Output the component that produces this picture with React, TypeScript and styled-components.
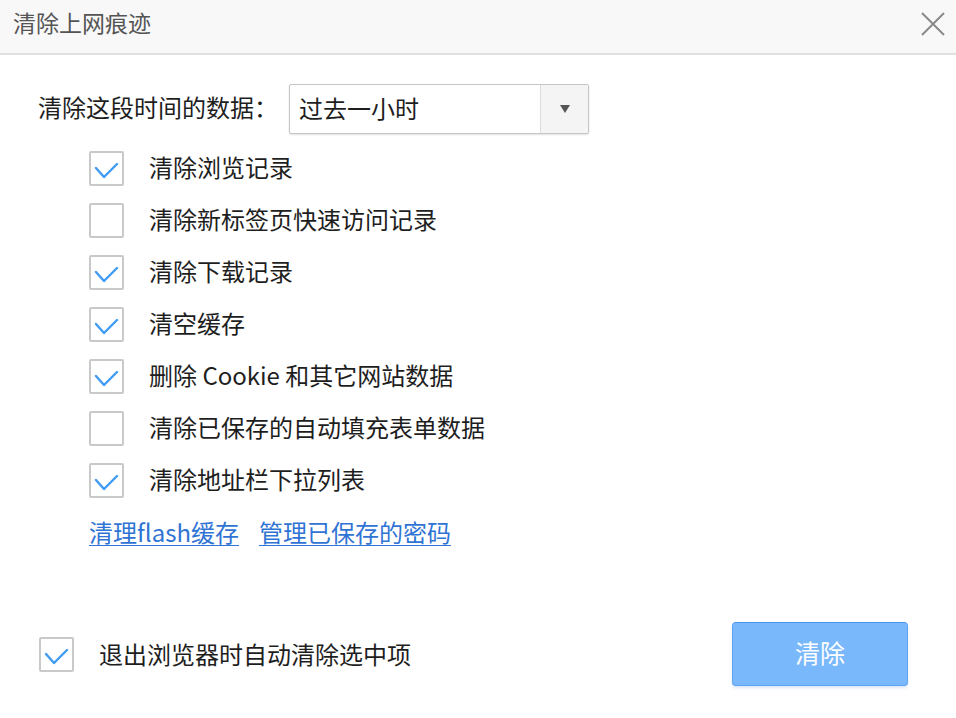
import React, { useState } from 'react';
import styled, { createGlobalStyle } from 'styled-components';

const GlobalStyle = createGlobalStyle`
  html, body {
    margin: 0;
    padding: 0;
    background: #ffffff;
  }
  body {
    font-family: "Noto Sans CJK SC", "Noto Sans", sans-serif;
  }
`;

const Dialog = styled.div`
  width: 956px;
  height: 718px;
  display: flex;
  flex-direction: column;
  background: #fff;
  color: #222;
`;

const Header = styled.div`
  height: 53px;
  flex-shrink: 0;
  display: flex;
  align-items: center;
  justify-content: space-between;
  padding: 0 10px 0 13px;
  background: #f8f8f8;
  border-bottom: 2px solid #e0e0e0;
`;

const Title = styled.div`
  font-size: 23px;
  line-height: 30px;
  color: #555;
  margin-top: -10px;
`;

const CloseButton = styled.button`
  width: 26px;
  height: 26px;
  padding: 0;
  border: none;
  background: transparent;
  cursor: pointer;
  display: flex;
  align-items: center;
  justify-content: center;
  margin-top: -6px;
`;

const Main = styled.div`
  padding: 29px 0 0 38px;
`;

const TimeRow = styled.div`
  display: flex;
  align-items: center;
`;

const Label = styled.span`
  font-size: 24px;
  line-height: 30px;
  width: 251px;
  padding-bottom: 4px;
  color: #1e1e1e;
`;

const Select = styled.div`
  width: 300px;
  height: 50px;
  box-sizing: border-box;
  border: 1px solid #c6c6c6;
  border-radius: 2px;
  box-shadow: 0 1px 2px rgba(0, 0, 0, 0.12);
  display: flex;
  align-items: stretch;
  background: #fff;
`;

const SelectValue = styled.div`
  flex: 1;
  display: flex;
  align-items: center;
  padding: 0 0 4px 9px;
  font-size: 24px;
  color: #1e1e1e;
`;

const SelectArrow = styled.div`
  width: 47px;
  border-left: 1px solid #dcdcdc;
  background: #f4f4f4;
  display: flex;
  align-items: center;
  justify-content: center;
`;

const Triangle = styled.div`
  width: 0;
  height: 0;
  border-left: 5px solid transparent;
  border-right: 5px solid transparent;
  border-top: 8px solid #555;
`;

const List = styled.div`
  display: flex;
  flex-direction: column;
  gap: 17px;
  margin-top: 17px;
  padding-left: 51px;
`;

const Row = styled.label`
  display: flex;
  align-items: center;
  gap: 25px;
  cursor: pointer;
`;

const Box = styled.span`
  width: 35px;
  height: 35px;
  box-sizing: border-box;
  border: 2px solid #c9c9c9;
  border-radius: 2px;
  background: #fff;
  display: flex;
  flex-shrink: 0;
`;

const RowText = styled.span<{ $lift?: number }>`
  font-size: 24px;
  line-height: 30px;
  padding-bottom: ${p => p.$lift ?? 4}px;
  color: #1e1e1e;
`;

const Links = styled.div`
  display: flex;
  gap: 20px;
  margin-top: 19px;
  padding-left: 51px;
`;

const Link = styled.a`
  font-size: 24px;
  line-height: 30px;
  color: #2f74d4;
  text-decoration: underline;
  text-underline-offset: 3px;
  text-decoration-thickness: 1px;
  cursor: pointer;
`;

const Footer = styled.div`
  margin-top: auto;
  display: flex;
  align-items: center;
  justify-content: space-between;
  padding: 0 48px 32px 39px;
`;

const ClearButton = styled.button`
  width: 176px;
  height: 64px;
  padding: 0 0 4px;
  border: 1px solid #5ea2f2;
  border-top-color: #4a93ee;
  border-radius: 4px;
  background: #7ab8fc;
  color: #fff;
  font-family: "Noto Sans CJK SC", "Noto Sans", sans-serif;
  font-size: 25px;
  cursor: pointer;
  box-shadow: 0 2px 3px rgba(120, 160, 220, 0.25);
`;

const Check = () => (
  <svg width="31" height="31" viewBox="0 0 31 31">
    <polyline points="5,15 13,24 26,11" fill="none" stroke="#3f9cf2" strokeWidth="2.4" strokeLinecap="round" strokeLinejoin="round" />
  </svg>
);

const Checkbox: React.FC<{ checked: boolean; onToggle: () => void }> = ({ checked, onToggle }) => (
  <Box onClick={onToggle}>{checked && <Check />}</Box>
);

const items = [
  { label: '清除浏览记录', checked: true },
  { label: '清除新标签页快速访问记录', checked: false },
  { label: '清除下载记录', checked: true },
  { label: '清空缓存', checked: true },
  { label: '删除 Cookie 和其它网站数据', checked: true },
  { label: '清除已保存的自动填充表单数据', checked: false },
  { label: '清除地址栏下拉列表', checked: true },
];

export default function App() {
  const [checks, setChecks] = useState(items.map(i => i.checked));
  const [autoClear, setAutoClear] = useState(true);

  const toggle = (idx: number) => setChecks(c => c.map((v, i) => (i === idx ? !v : v)));

  return (
    <>
      <GlobalStyle />
      <Dialog>
        <Header>
          <Title>清除上网痕迹</Title>
          <CloseButton aria-label="关闭">
            <svg width="26" height="26" viewBox="0 0 26 26">
              <path d="M2 2 L24 24 M24 2 L2 24" stroke="#8a8a8a" strokeWidth="2" fill="none" />
            </svg>
          </CloseButton>
        </Header>
        <Main>
          <TimeRow>
            <Label>清除这段时间的数据：</Label>
            <Select>
              <SelectValue>过去一小时</SelectValue>
              <SelectArrow>
                <Triangle />
              </SelectArrow>
            </Select>
          </TimeRow>
          <List>
            {items.map((item, i) => (
              <Row key={item.label}>
                <Checkbox checked={checks[i]} onToggle={() => toggle(i)} />
                <RowText>{item.label}</RowText>
              </Row>
            ))}
          </List>
          <Links>
            <Link>清理flash缓存</Link>
            <Link>管理已保存的密码</Link>
          </Links>
        </Main>
        <Footer>
          <Row>
            <Checkbox checked={autoClear} onToggle={() => setAutoClear(v => !v)} />
            <RowText $lift={0}>退出浏览器时自动清除选中项</RowText>
          </Row>
          <ClearButton>清除</ClearButton>
        </Footer>
      </Dialog>
    </>
  );
}
